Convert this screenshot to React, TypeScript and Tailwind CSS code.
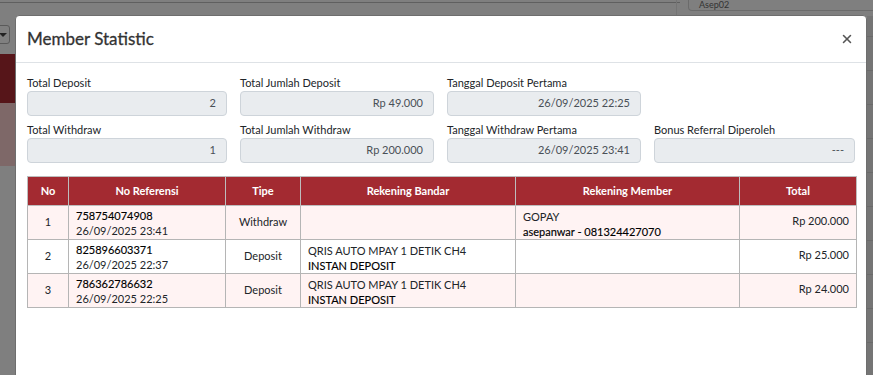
import { X } from 'lucide-react';

type Row = {
  no: number;
  ref: string;
  date: string;
  tipe: string;
  bandar: [string, string] | null;
  member: [string, string] | null;
  total: string;
};

const rows: Row[] = [
  {
    no: 1,
    ref: '758754074908',
    date: '26/09/2025 23:41',
    tipe: 'Withdraw',
    bandar: null,
    member: ['GOPAY', 'asepanwar - 081324427070'],
    total: 'Rp 200.000',
  },
  {
    no: 2,
    ref: '825896603371',
    date: '26/09/2025 22:37',
    tipe: 'Deposit',
    bandar: ['QRIS AUTO MPAY 1 DETIK CH4', 'INSTAN DEPOSIT'],
    member: null,
    total: 'Rp 25.000',
  },
  {
    no: 3,
    ref: '786362786632',
    date: '26/09/2025 22:25',
    tipe: 'Deposit',
    bandar: ['QRIS AUTO MPAY 1 DETIK CH4', 'INSTAN DEPOSIT'],
    member: null,
    total: 'Rp 24.000',
  },
];

function Field({ label, value }: { label: string; value: string }) {
  return (
    <div className="flex flex-col">
      <label className="text-[11px] leading-[14px] text-[#212529] mb-[1px]">{label}</label>
      <div className="h-[25px] rounded-[4px] border border-[#ced4da] bg-[#e9ecef] px-[10px] flex items-center justify-end text-[11px] text-[#495057]">
        {value}
      </div>
    </div>
  );
}

// second line of an account cell is a touch heavier than the first
function TwoLine({ lines }: { lines: [string, string] | null }) {
  if (!lines) return null;
  return (
    <>
      <div>{lines[0]}</div>
      <div className="text-black [-webkit-text-stroke:0.15px_#000]">{lines[1]}</div>
    </>
  );
}

export default function App() {
  return (
    <div
      className="relative w-[873px] h-[375px] overflow-hidden bg-[#7f7f7f]"
      style={{ fontFamily: 'Lato, "Open Sans", sans-serif' }}
    >
      {/* dimmed page behind the modal */}
      <div className="absolute left-0 top-0 w-[680px] h-[3px] border-b border-[#5f5f5f]" />
      <div className="absolute left-[-6px] top-[25px] w-[16px] h-[19px] rounded-[3px] border border-[#5a5a5a] bg-[#808080] flex items-center justify-end pr-[2px]">
        <div className="w-0 h-0 border-l-[4px] border-r-[4px] border-t-[4px] border-l-transparent border-r-transparent border-t-[#222]" />
      </div>
      <div className="absolute left-0 top-[54px] w-[20px] h-[49px] bg-[#561519]" />
      <div className="absolute left-0 top-[103px] w-[20px] h-[63px] bg-[#7e6868]" />
      <div className="absolute left-[676px] top-0 w-[1px] h-[16px] bg-[#747474]" />
      <div className="absolute left-[688px] top-0 w-[190px] h-[11px] rounded-b-[4px] border border-t-0 border-[#6b6b6b] text-[9px] leading-[9px] pl-[10px] text-[#333]">
        Asep02
      </div>
      <div className="absolute right-0 top-[16px] w-[6px] h-[360px] bg-[#757575] flex flex-col gap-[33px] pt-[20px]">
        {Array.from({ length: 10 }).map((_, i) => (
          <div key={i} className="h-px bg-[#6a6a6a]" />
        ))}
      </div>

      {/* modal */}
      <div className="absolute left-[15px] top-[15px] w-[852px] h-[380px] rounded-[4px] bg-white border border-[#6e6e6e]">
        <div className="h-[47px] border-b border-[#dee2e6] flex items-center justify-between pl-[11px] pr-[12px]">
          <h5 className="text-[17px] font-normal text-[#333] leading-none pb-[2px] [-webkit-text-stroke:0.3px_#333]">
            Member Statistic
          </h5>
          <X size={14} strokeWidth={2.6} className="text-[#555]" />
        </div>
        <div className="px-[11px] pt-[13px]">
          <div className="grid grid-cols-[200px_194px_194px_201px] gap-x-[13px] gap-y-[7px]">
            <Field label="Total Deposit" value="2" />
            <Field label="Total Jumlah Deposit" value="Rp 49.000" />
            <Field label="Tanggal Deposit Pertama" value="26/09/2025 22:25" />
            <div />
            <Field label="Total Withdraw" value="1" />
            <Field label="Total Jumlah Withdraw" value="Rp 200.000" />
            <Field label="Tanggal Withdraw Pertama" value="26/09/2025 23:41" />
            <Field label="Bonus Referral Diperoleh" value="---" />
          </div>

          <table className="mt-[13px] w-[829px] border-collapse text-[11px] text-[#212529] table-fixed">
            <colgroup>
              <col className="w-[41px]" />
              <col className="w-[157px]" />
              <col className="w-[75px]" />
              <col className="w-[215px]" />
              <col className="w-[224px]" />
              <col className="w-[117px]" />
            </colgroup>
            <thead>
              <tr className="bg-[#a32a31] text-white h-[29px]">
                {['No', 'No Referensi', 'Tipe', 'Rekening Bandar', 'Rekening Member', 'Total'].map((h) => (
                  <th key={h} className="border border-[#bdbdbd] font-bold text-center text-[11px]">
                    {h}
                  </th>
                ))}
              </tr>
            </thead>
            <tbody>
              {rows.map((r) => (
                <tr key={r.no} className={`h-[34px] ${r.no % 2 === 1 ? 'bg-[#fff3f3]' : 'bg-white'}`}>
                  <td className="border border-[#b5b5b5] text-center">{r.no}</td>
                  <td className="border border-[#b5b5b5] px-[7px] leading-[15px]">
                    <div className="text-black [-webkit-text-stroke:0.15px_#000]">{r.ref}</div>
                    <div>{r.date}</div>
                  </td>
                  <td className="border border-[#b5b5b5] text-center">{r.tipe}</td>
                  <td className="border border-[#b5b5b5] px-[7px] leading-[15px] pt-[2px]">
                    <TwoLine lines={r.bandar} />
                  </td>
                  <td className="border border-[#b5b5b5] px-[7px] leading-[15px] pt-[2px]">
                    <TwoLine lines={r.member} />
                  </td>
                  <td className="border border-[#b5b5b5] px-[7px] text-right pb-[3px]">{r.total}</td>
                </tr>
              ))}
            </tbody>
          </table>
        </div>
      </div>
    </div>
  );
}
